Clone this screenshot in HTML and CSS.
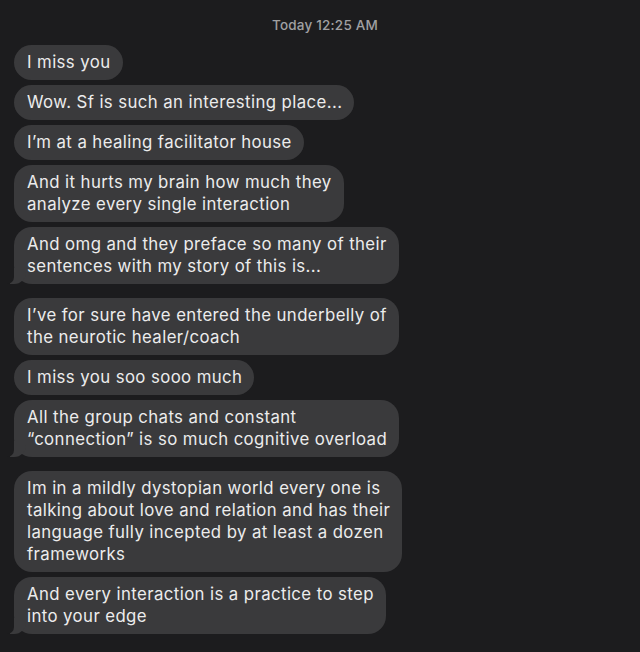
FILE: index.html
```html
<!DOCTYPE html>
<html lang="en">
<head>
<meta charset="UTF-8" />
<meta name="viewport" content="width=device-width, initial-scale=1.0" />
<title>Messages</title>
<link rel="stylesheet" href="styles.css">
</head>
<body>
<main class="thread">
  <p class="stamp">Today 12:25 AM</p>

  <!-- ------ first group ------ -->
  <section class="group">
    <p class="bubble">I miss you</p>
    <p class="bubble">Wow. Sf is such an interesting place...</p>
    <p class="bubble">I’m at a healing facilitator house</p>
    <p class="bubble">And it hurts my brain how much they<br>analyze every single interaction</p>
    <p class="bubble tail">And omg and they preface so many of their<br>sentences with my story of this is...</p>
  </section>

  <section class="group">
    <p class="bubble">I’ve for sure have entered the underbelly of<br>the neurotic healer/coach</p>
    <p class="bubble">I miss you soo sooo much</p>
    <p class="bubble tail">All the group chats and constant<br>“connection” is so much cognitive overload</p>
  </section>

  <section class="group">
    <p class="bubble">Im in a mildly dystopian world every one is<br>talking about love and relation and has their<br>language fully incepted by at least a dozen<br>frameworks</p>
    <p class="bubble tail">And every interaction is a practice to step<br>into your edge</p>
  </section>
</main>
</body>
</html>
```

FILE: styles.css
```css
/* ---------- Root variables ---------- */
:root {
  --page: #1c1c1e;
  --bubble: #3a3a3c;
  --text: #ececec;
  --muted: #a0a0a2;
  --font-sans: Inter, "Liberation Sans", Arial, sans-serif;
}

/* ---------- Global styles ---------- */
body {
  margin: 0;
  background: var(--page);
  color: var(--text);
  font-family: var(--font-sans);
  min-height: 100vh;
}

.thread {
  padding: 16px 14px 0;
  display: flex;
  flex-direction: column;
  gap: 14px;
}

.stamp {
  margin: 0 0 -3px;
  text-align: center;
  padding-left: 10px;
  font-size: 13.5px;
  line-height: 18px;
  font-weight: 500;
  letter-spacing: 0.2px;
  color: var(--muted);
}

/* ----- Message groups ----- */
.group {
  display: flex;
  flex-direction: column;
  align-items: flex-start;
  gap: 5px;
}

.bubble {
  position: relative;
  margin: 0;
  padding: 6px 12px 7px 13px;
  background: var(--bubble);
  border-radius: 18px;
  font-size: 16.8px;
  line-height: 22px;
  letter-spacing: 0.4px;
  white-space: nowrap;
}

/* little curl on the last bubble of a group */
.bubble.tail::before,
.bubble.tail::after {
  content: "";
  position: absolute;
  bottom: 0;
  height: 16px;
}
.bubble.tail::before {
  left: -4px;
  width: 16px;
  background: var(--bubble);
  border-bottom-right-radius: 12px;
}
.bubble.tail::after {
  left: -8px;
  width: 8px;
  background: var(--page);
  border-bottom-right-radius: 7px;
}
```
